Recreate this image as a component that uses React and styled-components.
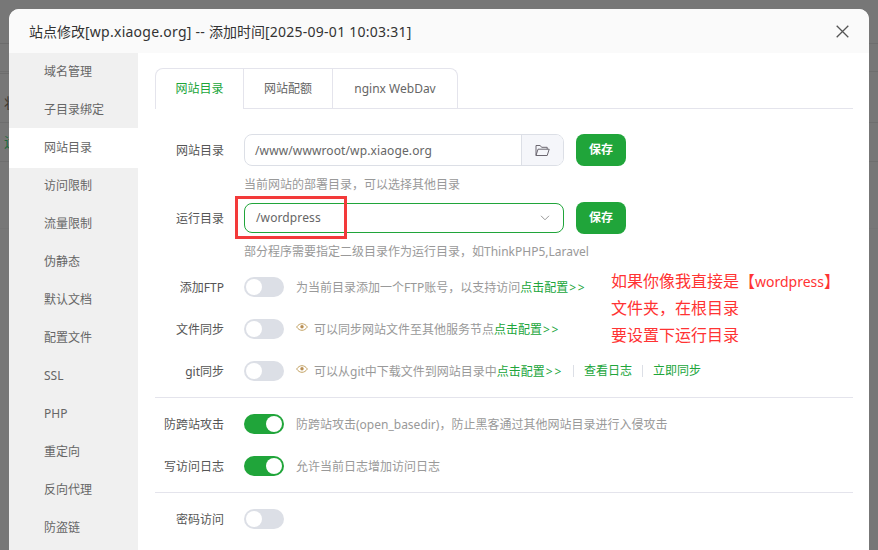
import React from 'react';
import styled, { createGlobalStyle } from 'styled-components';

const GlobalStyle = createGlobalStyle`
  html, body { margin: 0; padding: 0; height: 100%; overflow: hidden; }
  body { font-family: "Noto Sans", "Noto Sans CJK SC", sans-serif; background: #777; }
  * { box-sizing: border-box; }
`;

const menuItems = ['域名管理', '子目录绑定', '网站目录', '访问限制', '流量限制', '伪静态', '默认文档', '配置文件', 'SSL', 'PHP', '重定向', '反向代理', '防盗链'];

function FolderIcon() {
  return (
    <svg width="15" height="13" viewBox="0 0 15 13" fill="none" stroke="#6b6770" strokeWidth="1">
      <path d="M1 11.5V1.5h4.2l1.4 1.8h5.6v1.9" />
      <path d="M1 11.5h11.2l2-6.3H3L1 11.5z" />
    </svg>
  );
}

function EyeIcon() {
  return (
    <svg width="12" height="10" viewBox="0 0 12 10" fill="none" stroke="#c3a263" strokeWidth="1">
      <path d="M.6 5C2.2 2.8 4 1.7 6 1.7S9.8 2.8 11.4 5C9.8 7.2 8 8.3 6 8.3S2.2 7.2.6 5z" />
      <circle cx="6" cy="4.8" r="1.7" fill="#b98f55" stroke="none" />
    </svg>
  );
}

function ChevronIcon() {
  return (
    <svg width="10" height="6" viewBox="0 0 10 6" fill="none" stroke="#999" strokeWidth="1">
      <path d="M1 .8l4 4 4-4" />
    </svg>
  );
}

function CloseIcon() {
  return (
    <svg width="13" height="13" viewBox="0 0 13 13" fill="none" stroke="#555" strokeWidth="1.3">
      <path d="M.7.7l11.6 11.6M12.3.7L.7 12.3" />
    </svg>
  );
}

function ConfigLink() {
  return <GreenLink>点击配置<Arrows>&gt;&gt;</Arrows></GreenLink>;
}

export default function App() {
  return (
    <Page>
      <GlobalStyle />
      <Backdrop>
        <BackdropBox />
        <BackdropRow $height={44} />
        <BackdropRow $height={28} />
        <BackdropRow $height={51}><BackdropGlyph>状</BackdropGlyph></BackdropRow>
        <BackdropRow $height={39} $green><BackdropGlyph>运</BackdropGlyph></BackdropRow>
        <BackdropRow $height={67} $faint />
      </Backdrop>
      <Modal>
        <Header>
          <Title>站点修改<TitleLatin>[wp.xiaoge.org] -- </TitleLatin>添加时间<TitleLatin>[2025-09-01 10:03:31]</TitleLatin></Title>
          <CloseIcon />
        </Header>
        <Body>
          <Sidebar>
            {menuItems.map((item) => (
              <MenuItem key={item} $active={item === '网站目录'}>{item}</MenuItem>
            ))}
          </Sidebar>
          <Content>
            <Tabs>
              <Tab $active $width={89}>网站目录</Tab>
              <Tab $width={89}>网站配额</Tab>
              <Tab $width={125} $last>nginx WebDav</Tab>
            </Tabs>

            <FieldRow>
              <Label>网站目录</Label>
              <InputGroup>
                <InputText>/www/wwwroot/wp.xiaoge.org</InputText>
                <FolderButton><FolderIcon /></FolderButton>
              </InputGroup>
              <SaveButton>保存</SaveButton>
            </FieldRow>
            <Help>当前网站的部署目录，可以选择其他目录</Help>

            <FieldRow $tight>
              <Label>运行目录</Label>
              <SelectBox>
                <InputText $select>/wordpress</InputText>
                <ChevronIcon />
                <Highlight />
              </SelectBox>
              <SaveButton>保存</SaveButton>
            </FieldRow>
            <Help $second>部分程序需要指定二级目录作为运行目录，如ThinkPHP5,Laravel</Help>

            <SwitchRow $first>
              <Label>添加FTP</Label>
              <Switch />
              <Note>为当前目录添加一个FTP账号，以支持访问<ConfigLink /></Note>
            </SwitchRow>
            <SwitchRow>
              <Label>文件同步</Label>
              <Switch />
              <EyeIcon />
              <Note>可以同步网站文件至其他服务节点<ConfigLink /></Note>
            </SwitchRow>
            <SwitchRow>
              <Label>git同步</Label>
              <Switch />
              <EyeIcon />
              <Note>可以从git中下载文件到网站目录中<ConfigLink /></Note>
              <ActionLink>查看日志</ActionLink>
              <ActionLink>立即同步</ActionLink>
            </SwitchRow>
            <Divider />
            <SwitchRow $afterDivider>
              <Label>防跨站攻击</Label>
              <Switch $on />
              <Note>防跨站攻击(open_basedir)，防止黑客通过其他网站目录进行入侵攻击</Note>
            </SwitchRow>
            <SwitchRow>
              <Label>写访问日志</Label>
              <Switch $on />
              <Note>允许当前日志增加访问日志</Note>
            </SwitchRow>
            <Divider />
            <SwitchRow $afterDivider>
              <Label>密码访问</Label>
              <Switch />
            </SwitchRow>

            <Annotation>
              如果你像我直接是【<AnnotationLatin>wordpress</AnnotationLatin>】<br />
              文件夹，在根目录<br />
              要设置下运行目录
            </Annotation>
          </Content>
        </Body>
      </Modal>
    </Page>
  );
}

const Page = styled.div`
  position: relative;
  width: 878px;
  height: 550px;
  overflow: hidden;
  background: #777;
`;

const Backdrop = styled.div`
  position: relative;
`;

const BackdropBox = styled.div`
  position: absolute;
  left: -8px;
  top: 43px;
  width: 28px;
  height: 31px;
  border: 1px solid #6c6c6c;
  border-radius: 5px;
`;

const BackdropRow = styled.div`
  display: flex;
  align-items: flex-end;
  height: ${(p) => p.$height}px;
  border-bottom: 1px solid ${(p) => (p.$faint ? '#747474' : '#6e6e6e')};
  color: ${(p) => (p.$green ? '#1c6a3c' : '#3e3830')};
  font-size: 14px;
`;

const BackdropGlyph = styled.span`
  margin: 0 0 9px 4px;
  line-height: 20px;
`;

const Modal = styled.div`
  position: absolute;
  left: 9px;
  top: 9px;
  width: 860px;
  height: 560px;
  background: #fff;
  border-radius: 10px 10px 0 0;
  overflow: hidden;
`;

const Header = styled.div`
  display: flex;
  align-items: center;
  justify-content: space-between;
  height: 44px;
  padding: 0 20px;
  background: #fafafa;
`;

const Title = styled.div`
  font-size: 14px;
  color: #333;
`;

const TitleLatin = styled.span`
  letter-spacing: 0.25px;
`;

const Body = styled.div`
  display: flex;
`;

const Sidebar = styled.div`
  width: 129px;
  flex-shrink: 0;
  height: 516px;
  background: #f0f0f0;
`;

const MenuItem = styled.div`
  height: ${(p) => (p.$active ? '40px' : '38px')};
  margin-top: ${(p) => (p.$active ? '-1px' : '0')};
  margin-bottom: ${(p) => (p.$active ? '-1px' : '0')};
  padding-left: 35px;
  font-size: 12px;
  line-height: ${(p) => (p.$active ? '40px' : '38px')};
  color: #666;
  background: ${(p) => (p.$active ? '#fff' : 'transparent')};
`;

const Content = styled.div`
  position: relative;
  flex: 1;
  padding: 15px 16px 0 17px;
`;

const Tabs = styled.div`
  display: flex;
  height: 41px;
  border-bottom: 1px solid #e4e4ec;
`;

const Tab = styled.div`
  width: ${(p) => p.$width}px;
  height: ${(p) => (p.$active ? '41px' : '40px')};
  border: 1px solid #e4e4ec;
  border-left: ${(p) => (p.$active ? '1px solid #e4e4ec' : 'none')};
  border-bottom: none;
  border-radius: ${(p) => (p.$active ? '8px 0 0 0' : p.$last ? '0 8px 0 0' : '0')};
  background: #fff;
  font-size: 12px;
  line-height: 39px;
  text-align: center;
  color: ${(p) => (p.$active ? '#20a53a' : '#666')};
`;

const FieldRow = styled.div`
  display: flex;
  align-items: center;
  height: 32px;
  margin-top: ${(p) => (p.$tight ? '9px' : '25px')};
`;

const Label = styled.div`
  width: 69px;
  margin-right: 20px;
  flex-shrink: 0;
  font-size: 12px;
  text-align: right;
  color: #555;
  white-space: nowrap;
`;

const InputGroup = styled.div`
  display: flex;
  width: 320px;
  height: 32px;
  border: 1px solid #dcdfe6;
  border-radius: 8px;
  overflow: hidden;
`;

const InputText = styled.div`
  flex: 1;
  padding-left: ${(p) => (p.$select ? '11px' : '10px')};
  font-size: 12px;
  line-height: 32px;
  letter-spacing: 0.12px;
  color: #666;
`;

const FolderButton = styled.div`
  display: flex;
  align-items: center;
  justify-content: center;
  width: 42px;
  border-left: 1px solid #dcdfe6;
  background: #f5f6fa;
`;

const SelectBox = styled.div`
  position: relative;
  display: flex;
  align-items: center;
  width: 320px;
  height: 30px;
  padding-right: 13px;
  border: 1px solid #20a53a;
  border-radius: 8px;
`;

const Highlight = styled.div`
  position: absolute;
  left: -10px;
  top: -8px;
  width: 112px;
  height: 43px;
  border: 3px solid #f33a3a;
`;

const SaveButton = styled.div`
  width: 50px;
  height: 32px;
  margin-left: 12px;
  border-radius: 8px;
  background: #20a53a;
  color: #fff;
  font-size: 12px;
  font-weight: 700;
  line-height: 32px;
  text-align: center;
`;

const Help = styled.div`
  margin: ${(p) => (p.$second ? '9px' : '10px')} 0 0 89px;
  height: 17px;
  font-size: 12px;
  line-height: 17px;
  color: #999;
`;

const SwitchRow = styled.div`
  display: flex;
  align-items: center;
  height: 20px;
  margin-top: ${(p) => (p.$first ? '17px' : p.$afterDivider ? '16px' : '22px')};
`;

const Switch = styled.div`
  position: relative;
  flex-shrink: 0;
  width: 40px;
  height: 20px;
  margin-right: 12px;
  border-radius: 10px;
  background: ${(p) => (p.$on ? '#20a53a' : '#dcdfe6')};

  &::after {
    content: '';
    position: absolute;
    top: 2px;
    left: ${(p) => (p.$on ? '22px' : '2px')};
    width: 16px;
    height: 16px;
    border-radius: 50%;
    background: #fff;
  }

  & + svg {
    margin: 0 6px 4px 0;
  }
`;

const Note = styled.div`
  font-size: 12px;
  color: #999;
  white-space: nowrap;
`;

const GreenLink = styled.span`
  color: #20a53a;
`;

const Arrows = styled.span`
  margin-left: 1px;
  letter-spacing: 1.7px;
`;

const ActionLink = styled.div`
  margin-left: 10px;
  padding-left: 10px;
  border-left: 1px solid #dcdfe6;
  font-size: 12px;
  line-height: 12px;
  color: #20a53a;
`;

const Divider = styled.div`
  height: 1px;
  margin-top: 16px;
  background: #e4e4ec;
`;

const Annotation = styled.div`
  position: absolute;
  left: 473px;
  top: 215px;
  font-size: 16px;
  line-height: 27px;
  color: #ff3333;
  white-space: nowrap;
`;

const AnnotationLatin = styled.span`
  font-size: 14px;
`;
